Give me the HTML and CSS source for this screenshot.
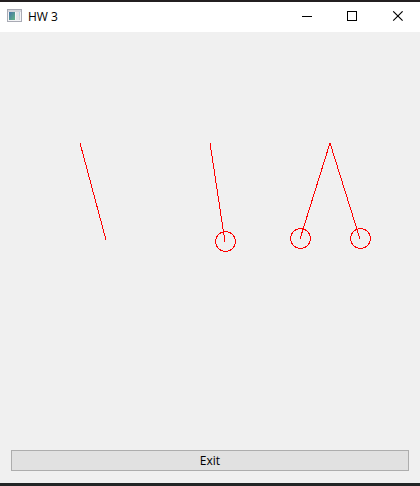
FILE: index.html
```html
<!DOCTYPE html>
<html lang="en">
<head>
<meta charset="utf-8">
<title>HW 3</title>
<link rel="stylesheet" href="styles.css">
</head>
<body>
<div class="window">
  <header class="titlebar">
    <svg class="app-icon" width="16" height="16" viewBox="0 0 16 16" aria-hidden="true">
      <defs>
        <linearGradient id="pane" x1="0" y1="0" x2="1" y2="1">
          <stop offset="0" stop-color="#4674a8"/>
          <stop offset="1" stop-color="#62b583"/>
        </linearGradient>
      </defs>
      <rect x="0.5" y="0.5" width="14" height="12" fill="#f4f4f6" stroke="#a9abb5"/>
      <rect x="1" y="1" width="13" height="2" fill="#d4d5db"/>
      <rect x="2" y="3" width="6" height="8" fill="url(#pane)"/>
      <rect x="9" y="3" width="3" height="8" fill="#e2e4e7"/>
      <rect x="12" y="3" width="1" height="4" fill="#b9d3e0"/>
      <rect x="12" y="7" width="1" height="4" fill="#d0d2d8"/>
    </svg>
    <h1 class="title">HW 3</h1>
    <div class="controls">
      <button class="control" type="button" aria-label="Minimize">
        <svg width="11" height="12" viewBox="0 0 11 12" shape-rendering="crispEdges"><rect x="0" y="5" width="10" height="1"/></svg>
      </button>
      <button class="control" type="button" aria-label="Maximize">
        <svg width="11" height="12" viewBox="0 0 11 12" shape-rendering="crispEdges"><rect x="0.5" y="0.5" width="9" height="9" fill="none" stroke="#000"/></svg>
      </button>
      <button class="control" type="button" aria-label="Close">
        <svg width="11" height="12" viewBox="0 0 11 12"><path d="M1.2 0.3L10.6 9.7M10.6 0.3L1.2 9.7" fill="none" stroke="#000" stroke-width="1.1"/></svg>
      </button>
    </div>
  </header>
  <main class="content">
    <svg class="scene" role="img" aria-label="Three pendulums" shape-rendering="crispEdges">
      <line x1="80" y1="111" x2="106" y2="208"/>
      <line x1="210" y1="111" x2="225" y2="210"/>
      <circle cx="225.5" cy="209.5" r="10"/>
      <line x1="330" y1="111" x2="300" y2="207"/>
      <circle cx="300.5" cy="206.5" r="10"/>
      <line x1="330" y1="111" x2="360" y2="207"/>
      <circle cx="360.5" cy="206.5" r="10"/>
    </svg>
    <button class="exit" type="button">Exit</button>
  </main>
</div>
</body>
</html>
```
FILE: styles.css
```css
* {
  box-sizing: border-box;
}

body {
  margin: 0;
  font-family: "Open Sans", "Noto Sans", sans-serif;
  font-size: 12px;
  color: #000;
}

.window {
  display: flex;
  flex-direction: column;
  min-height: 100vh;
  border-top: 2px solid #231f20;
  border-bottom: 3px solid #222526;
  background: #f0f0f0;
}

.titlebar {
  display: flex;
  align-items: center;
  height: 30px;
  padding-left: 7px;
  background: #fff;
}

.app-icon {
  flex: none;
}

.title {
  flex: 1;
  margin: 0 0 0 5px;
  font-size: 12px;
  font-weight: 400;
  line-height: 16px;
}

.controls {
  display: flex;
  align-self: stretch;
}

.control {
  display: flex;
  align-items: center;
  justify-content: center;
  width: 45px;
  padding: 0;
  border: 0;
  background: transparent;
}

.content {
  display: flex;
  flex: 1;
  flex-direction: column;
}

.scene {
  flex: 1;
  width: 100%;
  fill: none;
  stroke: #f00;
}

.exit {
  height: 21px;
  margin: 0 11px 12px;
  padding: 0;
  border: 1px solid #adadad;
  background: #e1e1e1;
  color: #000;
  font: inherit;
  line-height: 19px;
}
```
